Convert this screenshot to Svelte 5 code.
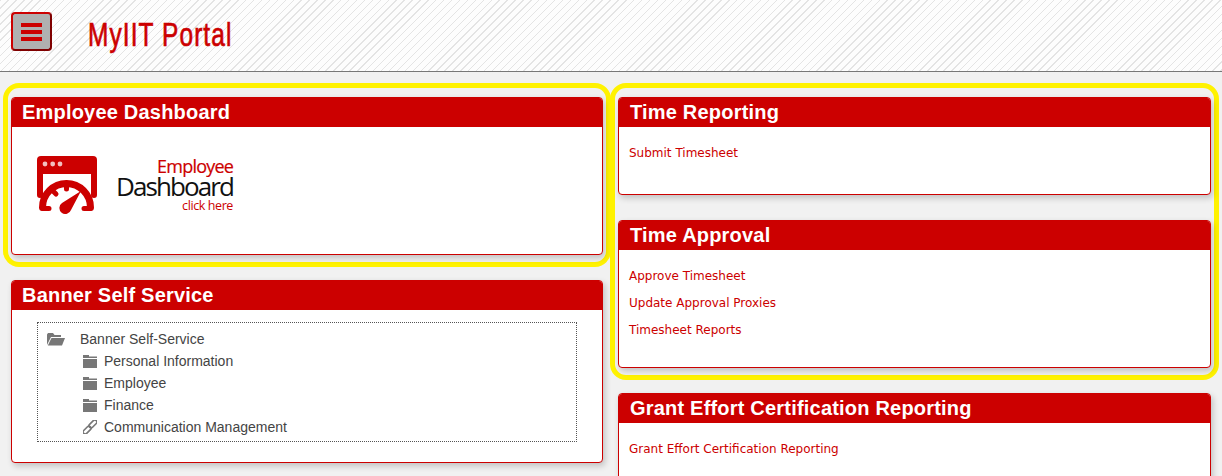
<script lang="ts">
  const approvals = ["Approve Timesheet", "Update Approval Proxies", "Timesheet Reports"];
  const bannerItems = [
    { label: "Personal Information", icon: "folder" },
    { label: "Employee", icon: "folder" },
    { label: "Finance", icon: "folder" },
    { label: "Communication Management", icon: "link" }
  ];
</script>

<header class="topbar">
  <button class="menu" aria-label="Menu">
    <span></span><span></span><span></span>
  </button>
  <h1>MyIIT Portal</h1>
</header>

<main class="columns">
  <div class="column">
    <div class="highlight">
      <section class="panel dash">
        <h2>Employee Dashboard</h2>
        <div class="body">
          <a class="logo" href="#dash">
            <svg width="60" height="58" viewBox="0 0 60 58">
              <path d="M4 0h52a4 4 0 0 1 4 4v14H0V4a4 4 0 0 1 4-4z" fill="#cc0000" />
              <path d="M0 16h6v23a3 3 0 0 1-6 0zM54 16h6v23a3 3 0 0 1-6 0z" fill="#cc0000" />
              <circle cx="8" cy="8" r="2.400" fill="#f3c0c0" />
              <circle cx="15.700" cy="8" r="2.400" fill="#f3c0c0" />
              <circle cx="23" cy="8" r="2.400" fill="#f3c0c0" />
              <path d="M5.500 51.500a24 24 0 0 1 48 0" fill="none" stroke="#cc0000" stroke-width="7" stroke-linecap="round" />
              <path d="M29.500 27v6M15 34l4 4M6 52.500h6M53 52.500h-6" stroke="#cc0000" stroke-width="5" stroke-linecap="round" />
              <path d="M44 35L34 54a6 6 0 1 1-9-7z" fill="#cc0000" />
            </svg>
            <span class="logotext">
              <span class="l1">Employee</span>
              <span class="l2">Dashboard</span>
              <span class="l3">click here</span>
            </span>
          </a>
        </div>
      </section>
    </div>

    <section class="panel banner">
      <h2>Banner Self Service</h2>
      <div class="body">
        <div class="tree">
          <div class="root">
            <svg width="18" height="14" viewBox="0 0 18 14">
              <path d="M0 13V2.500L1 1h5l1.500 2H14v2H4z" fill="#777" />
              <path d="M4.500 6H18l-3 7.500H.8z" fill="#777" />
            </svg>
            Banner Self-Service
          </div>
          {#each bannerItems as item}
            <div class="leaf">
              {#if item.icon === "folder"}
                <svg width="14" height="14" viewBox="0 0 14 14">
                  <path d="M0 1h6v1.500h8V4H0zM0 5h14v9H0z" fill="#777" />
                </svg>
              {:else}
                <svg width="14" height="14" viewBox="0 0 14 14" fill="none" stroke="#777" stroke-width="1.600">
                  <g transform="rotate(-45 7 7)">
                    <rect x="-2" y="5" width="9.500" height="4.200" rx="2.100" />
                    <rect x="6.500" y="4.800" width="9.500" height="4.200" rx="2.100" />
                  </g>
                </svg>
              {/if}
              {item.label}
            </div>
          {/each}
        </div>
      </div>
    </section>
  </div>

  <div class="column">
    <div class="highlight">
      <section class="panel time">
        <h2 class="wide">Time Reporting</h2>
        <div class="body links">
          <a href="#submit">Submit Timesheet</a>
        </div>
      </section>
      <section class="panel approval">
        <h2 class="wide">Time Approval</h2>
        <div class="body links">
          {#each approvals as link}
            <a href="#approval">{link}</a>
          {/each}
        </div>
      </section>
    </div>

    <section class="panel grant">
      <h2 class="wide">Grant Effort Certification Reporting</h2>
      <div class="body links">
        <a href="#grant">Grant Effort Certification Reporting</a>
      </div>
    </section>
  </div>
</main>

<style>
  :global(body) {
    background: #f1f1f1;
  }

  .topbar {
    height: 71px;
    border-bottom: 1px solid #777;
    background-color: #fdfdfd;
    background-image: repeating-linear-gradient(
      135deg,
      #e4e4e4 0,
      #e4e4e4 1px,
      transparent 1px,
      transparent 5.600px
    );
    display: flex;
    align-items: flex-start;
  }

  .menu {
    width: 41px;
    height: 39px;
    margin: 12px 0 0 11px;
    padding: 0;
    box-sizing: border-box;
    background: #b0b0b0;
    border: 2px solid;
    border-color: #cc0000 #800000 #800000 #cc0000;
    border-radius: 4px;
    display: flex;
    flex-direction: column;
    justify-content: center;
    align-items: center;
    gap: 3px;
  }

  .menu span {
    display: block;
    width: 21px;
    height: 4px;
    background: #cc0000;
  }

  h1 {
    margin: 14px 0 0 36px;
    font-family: "Liberation Sans", Arial, sans-serif;
    font-weight: 400;
    font-size: 33px;
    line-height: 42px;
    color: #cc0000;
    letter-spacing: 1.500px;
    -webkit-text-stroke: 0.7px #cc0000;
    transform: scaleX(0.74);
    transform-origin: left center;
    white-space: nowrap;
  }

  .columns {
    display: grid;
    grid-template-columns: 592px 593px;
    column-gap: 15px;
    padding: 25px 0 0 11px;
    height: 379px;
    overflow: hidden;
    align-items: start;
  }

  .column {
    display: flex;
    flex-direction: column;
    gap: 25px;
  }

  .highlight {
    margin: -14px -8px -12px;
    padding: 9px 3px 7px;
    border: 5px solid #fff200;
    border-radius: 16px;
    display: flex;
    flex-direction: column;
    gap: 25px;
  }

  .panel {
    box-sizing: border-box;
    background: #fff;
    border: 1px solid #cc0000;
    border-radius: 4px;
    box-shadow: 2px 3px 6px rgba(0, 0, 0, 0.2);
    overflow: hidden;
  }

  h2 {
    margin: 0;
    height: 29px;
    padding-left: 10px;
    background: #cc0000;
    color: #fff;
    font-family: "Liberation Sans", Arial, sans-serif;
    font-size: 20px;
    font-weight: 700;
    line-height: 29px;
    letter-spacing: 0.2px;
  }

  h2.wide {
    padding-left: 11px;
  }

  .dash { height: 158px; }
  .banner { height: 183px; }
  .time { height: 98px; }
  .approval { height: 148px; }
  .grant { height: 120px; }

  .logo {
    display: flex;
    align-items: flex-start;
    padding: 29px 0 0 25px;
    text-decoration: none;
  }

  .logotext {
    display: flex;
    flex-direction: column;
    align-items: flex-end;
    width: 136px;
    padding-top: 1px;
    font-family: "Open Sans", sans-serif;
    white-space: nowrap;
  }

  .l1 { color: #cc0000; font-size: 18px; line-height: 18px; letter-spacing: -0.8px; -webkit-text-stroke: 0.2px #cc0000; }
  .l2 { color: #111; font-size: 26px; line-height: 24px; letter-spacing: -1.900px; margin-top: -1px; }
  .l3 { color: #cc0000; font-size: 12.500px; line-height: 13px; letter-spacing: -0.4px; margin-top: 1px; }

  .tree {
    margin: 12px 25px 0;
    height: 120px;
    box-sizing: border-box;
    border: 1px dotted #555;
    padding: 5px 0 0 9px;
    font-family: "Liberation Sans", Arial, sans-serif;
    font-size: 14px;
    color: #444;
  }

  .root,
  .leaf {
    display: flex;
    align-items: center;
    height: 22px;
  }

  .root svg { margin-right: 15px; }

  .leaf { padding-left: 36px; }
  .leaf svg { margin-right: 7px; }

  .links {
    display: flex;
    flex-direction: column;
    align-items: flex-start;
    gap: 11px;
    padding: 18px 0 0 10px;
    font-family: "DejaVu Sans", Verdana, sans-serif;
    font-size: 12px;
    line-height: 16px;
  }

  .links a {
    color: #cc0000;
    text-decoration: none;
  }
</style>
